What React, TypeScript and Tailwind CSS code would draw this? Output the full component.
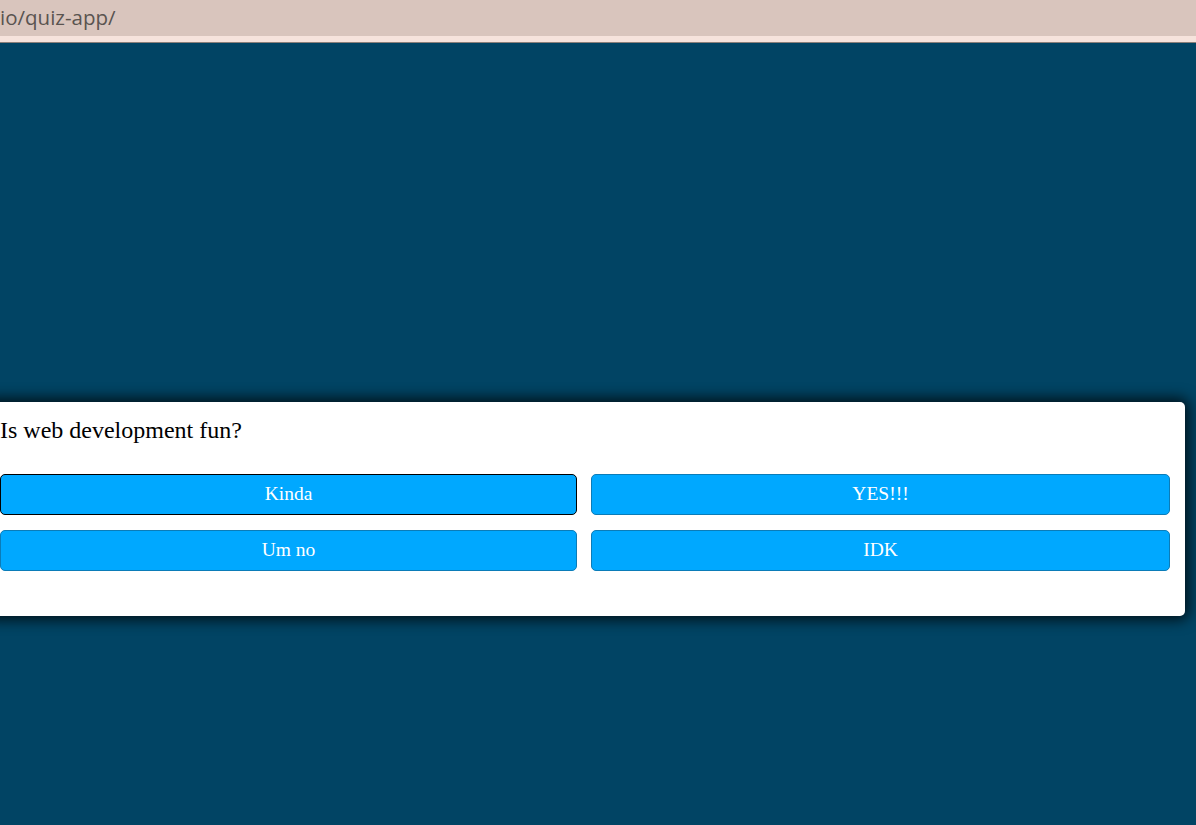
export default function App() {
  const answers = ["Kinda", "YES!!!", "Um no", "IDK"];
  return (
    <div className="h-[825px] w-full overflow-hidden bg-[#014464] flex flex-col">
      <div className="h-[36px] bg-[#d9c5bd] flex items-center shrink-0">
        <span
          className="text-[20.5px] text-[#5a5450] leading-none -mt-[1px]"
          style={{ fontFamily: '"Open Sans", "Noto Sans", sans-serif' }}
        >
          io/quiz-app/
        </span>
      </div>
      <div className="h-[6px] bg-[#f6e3dc] shrink-0" />
      <div className="h-[1px] bg-[#8a7f7a] shrink-0" />
      <div className="flex-1">
        <div
          className="mt-[359px] -ml-[15px] w-[1200px] bg-white rounded-[5px] shadow-[0_0_14px_4px_rgba(0,0,0,0.75)] px-[15px] pt-[15px] pb-[45px]"
          style={{ fontFamily: '"Liberation Serif", "Times New Roman", serif' }}
        >
          <h2 className="text-[24px] font-normal text-black leading-[1.15] mb-[29px]">
            Is web development fun?
          </h2>
          <div className="grid grid-cols-[577px_1fr] gap-x-[14px] gap-y-[15px]">
            {answers.map((a, i) => (
              <button
                key={a}
                className={`h-[41px] rounded-[5px] bg-[#00a8ff] text-white text-[19.5px] border ${
                  i === 0 ? "border-black" : "border-[#0b7cb8]"
                }`}
                style={{ fontFamily: '"Liberation Serif", "Times New Roman", serif' }}
              >
                {a}
              </button>
            ))}
          </div>
        </div>
      </div>
    </div>
  );
}
